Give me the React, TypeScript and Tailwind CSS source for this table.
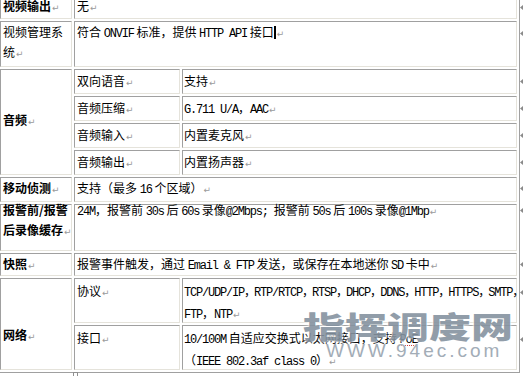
import React from "react";
import clsx from "clsx";

// Latin runs: the original uses SimSun, whose Latin glyphs are half-width (6px at 12px)
const L = ({ children }: { children: React.ReactNode }) => (
  <span className="font-['Liberation_Mono',monospace] tracking-[-1.2px]">{children}</span>
);

// narrow full-width comma, as in the protocol list
const C = () => <span className="-mr-[2px]">，</span>;

// Word paragraph mark
const P = () => (
  <span className="ml-px font-['DejaVu_Sans',sans-serif] text-[9px] font-normal text-[#9a9a9a]">↵</span>
);

const Cell = ({ className, children }: { className?: string; children?: React.ReactNode }) => (
  <div
    className={clsx(
      "border border-t-[#a0a0a0] border-l-[#a0a0a0] border-b-[#e5e3db] border-r-[#e5e3db] bg-white text-[12px] leading-[20px] text-black whitespace-nowrap",
      className
    )}
  >
    {children}
  </div>
);

const rowMarks = [7, 33, 81, 108, 135, 162, 188, 210, 264, 292, 339];

export default function App() {
  return (
    <div className="relative h-[376px] w-[523px] overflow-hidden bg-white font-['Noto_Sans_CJK_SC',sans-serif]">
      <div className="-ml-[3px] -mt-[8px] grid w-[523px] grid-cols-[72px_106px_335px] grid-rows-[24px_46px_25px_25px_25px_25px_25px_47px_23px_45px_45px] gap-[2px] border border-t-[#e5e3db] border-l-[#e5e3db] border-b-[#a0a0a0] border-r-[#a0a0a0] p-[2px]">
        {/* 视频输出 */}
        <Cell className="pl-[2px] font-bold">
          视频输出
          <P />
        </Cell>
        <Cell className="col-span-2 pl-[2px]">
          无<P />
        </Cell>

        {/* 视频管理系统 */}
        <Cell className="pl-[2px]">
          视频管理系
          <br />
          统<P />
        </Cell>
        <Cell className="col-span-2 pl-[2px]">
          符合 <L>ONVIF</L> 标准，提供 <L>HTTP API</L> 接口
          <span className="inline-block h-[13px] w-[2px] bg-black align-[-2px]" />
          <P />
        </Cell>

        {/* 音频 */}
        <Cell className="row-span-4 pl-[2px] pt-[40px] font-bold">
          音频
          <P />
        </Cell>
        <Cell className="pl-[2px] pt-px">
          双向语音
          <P />
        </Cell>
        <Cell className="pl-px pt-px">
          支持
          <P />
        </Cell>
        <Cell className="pl-[2px] pt-px">
          音频压缩
          <P />
        </Cell>
        <Cell className="pl-px pt-px">
          <L>G.711 U/A</L>，<L>AAC</L>
          <P />
        </Cell>
        <Cell className="pl-[2px] pt-px">
          音频输入
          <P />
        </Cell>
        <Cell className="pl-px pt-px">
          内置麦克风
          <P />
        </Cell>
        <Cell className="pl-[2px] pt-px">
          音频输出
          <P />
        </Cell>
        <Cell className="pl-px pt-px">
          内置扬声器
          <P />
        </Cell>

        {/* 移动侦测 */}
        <Cell className="pl-[2px] font-bold">
          移动侦测
          <P />
        </Cell>
        <Cell className="col-span-2 pl-[2px]">
          支持（最多 <L>16</L> 个区域）
          <P />
        </Cell>

        {/* 报警前/报警后录像缓存 */}
        <Cell className="pl-[2px] font-bold">
          <div className="-mt-[5px]">
            报警前/报警
            <br />
            后录像缓存
            <P />
          </div>
        </Cell>
        <Cell className="col-span-2 pl-[2px]">
          <div className="-mt-[5px]">
            <L>24M</L>，报警前 <L>30s</L> 后 <L>60s</L> 录像<L>@2Mbps; </L>报警前 <L>50s</L> 后 <L>100s</L> 录像<L>@1Mbp</L>
            <P />
          </div>
        </Cell>

        {/* 快照 */}
        <Cell className="pl-[2px] font-bold">
          快照
          <P />
        </Cell>
        <Cell className="col-span-2 pl-[2px]">
          报警事件触发，通过 <L>Email &amp; FTP</L> 发送，或保存在本地迷你 <L>SD</L> 卡中
          <P />
        </Cell>

        {/* 网络 */}
        <Cell className="row-span-2 pl-[2px] pt-[46px] font-bold">
          网络
          <P />
        </Cell>
        <Cell className="pl-[2px] pt-[2px]">
          协议
          <P />
        </Cell>
        <Cell className="pl-px pt-[2px]">
          <L>TCP/UDP/IP</L>
          <C />
          <L>RTP/RTCP</L>
          <C />
          <L>RTSP</L>
          <C />
          <L>DHCP</L>
          <C />
          <L>DDNS</L>
          <C />
          <L>HTTP</L>
          <C />
          <L>HTTPS</L>
          <C />
          <L>SMTP</L>
          <C />
          <br />
          <L>FTP</L>，<L>NTP</L>
          <P />
        </Cell>
        <Cell className="pl-[2px] pt-[2px]">
          接口
          <P />
        </Cell>
        <Cell className="pl-px pt-[2px]">
          <L>10/100M</L> 自适应交换式以太网接口，支持{" "}
          <span className="underline decoration-[#d04040] decoration-dotted underline-offset-2">
            <L>PoE</L>
          </span>
          <br />
          （<L>IEEE 802.3af class 0</L>）
          <P />
        </Cell>
      </div>

      {/* end-of-row marks beyond the table border */}
      {rowMarks.map((y) => (
        <svg key={y} className="absolute left-[520px]" style={{ top: y - 2 }} width="4" height="5" viewBox="0 0 4 5">
          <path d="M0 2.5 L3 0 L3 5 Z" fill="#8a8a8a" />
        </svg>
      ))}

      {/* column resize handle */}
      <div className="absolute left-[73px] top-[372px] h-[5px] w-[5px] border border-[#909090] bg-white" />

      {/* watermark */}
      <div className="pointer-events-none absolute left-[303px] top-[310px] origin-left scale-x-[1.4] font-['Noto_Sans_CJK_SC',sans-serif] text-[30px] font-black leading-[30px] text-[#8693a0] opacity-90 [text-shadow:0_0_2px_#fff,0_0_2px_#fff]">
        指挥调度网
      </div>
      <div className="pointer-events-none absolute left-[326px] top-[341px] font-['Liberation_Sans',sans-serif] text-[19px] leading-[19px] tracking-[3px] text-[#a3adb7] [text-shadow:0_0_2px_#fff]">
        WWW.94ec.com
      </div>
    </div>
  );
}
